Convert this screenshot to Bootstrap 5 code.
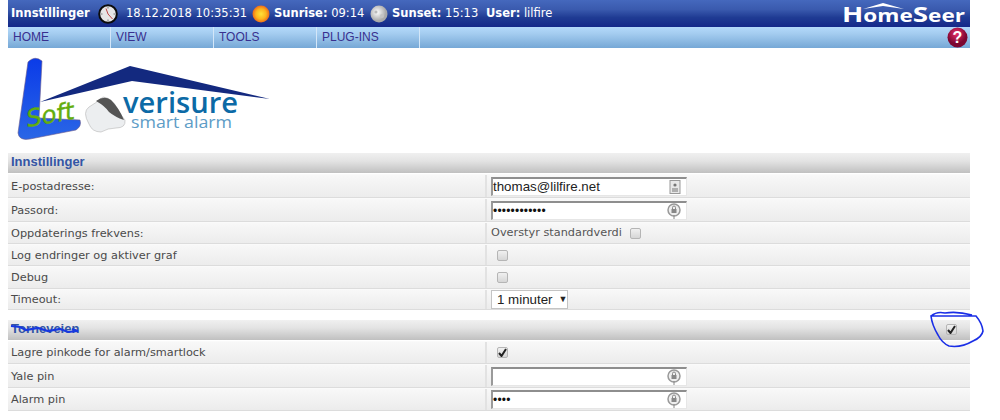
<!DOCTYPE html>
<html lang="no">
<head>
<meta charset="utf-8">
<title>Innstillinger</title>
<link rel="stylesheet" href="https://cdn.jsdelivr.net/npm/bootstrap@5.3.0/dist/css/bootstrap.min.css">
<style>
body{margin:0;background:#fff;font-family:"DejaVu Sans",sans-serif;font-size:11.3px;color:#444;overflow:hidden}
.hs-page{width:962px;margin-left:8px;position:relative;height:420px}
.hs-top{height:27px;background:linear-gradient(#4568bd,#3a5aae 35%,#1f3b93 65%,#14288a);color:#fff;font-size:11.5px;padding-left:3px;white-space:nowrap}
.hs-top b{font-weight:700}
.hs-title{width:87px}
.hs-date{width:122px}
.hs-rise{width:96px}
.hs-set{width:94px}
.hs-ic{flex:none;display:block}
.hs-logo{margin-left:auto;margin-right:3px}
.hs-nav{height:21px;background:linear-gradient(#b3d9fb,#a5cdf0 30%,#76a8d6);position:relative}
.hs-nav a{display:block;width:103px;height:21px;line-height:21px;padding-left:5px;font-family:"Liberation Sans",sans-serif;font-size:12px;color:#38308f;text-decoration:none;border-right:1px solid #d3e6f8}
.hs-help{position:absolute;right:2px;top:0}
.hs-brand{height:105px;display:block}
.hs-sec{margin-bottom:10px}
.hs-head{height:20px;line-height:18px;padding-left:3px;font-family:"Liberation Sans",sans-serif;font-size:13px;font-weight:700;color:#3355a5;background:linear-gradient(#f0f0f0,#e3e3e3 40%,#c0c0c0);margin-bottom:1px;position:relative}
.hs-row{height:22px;display:flex;border-bottom:1px solid #dcdcdc;border-top:1px solid #fafafa;background:linear-gradient(#f8f8f8,#ececec)}
.hs-h21{height:21px}
.hs-h23{height:23px}
.hs-h24{height:24px}
.hs-lab{width:479px;padding-left:3px;padding-top:2px;display:flex;align-items:center;border-right:2px solid #e2e2e2;flex:none;white-space:nowrap;color:#4a4a4a}
.hs-val{padding-left:4px;display:flex;align-items:center;flex:1;color:#555;white-space:nowrap}
.hs-in{width:196px;height:19px;background:#fff;border-top:2px solid #8e8e8e;border-left:2px solid #9a9a9a;border-right:1px solid #e6e6e6;border-bottom:1px solid #e6e6e6;display:flex;align-items:center;font-family:"Liberation Sans",sans-serif;font-size:13.33px;color:#222;justify-content:space-between}
.hs-in svg{margin-right:5px;flex:none}
.hs-dots{font-size:12px;letter-spacing:.2px;color:#111}
.hs-ck{width:11px;height:11px;border:1px solid #b5b5b5;border-radius:2px;background:linear-gradient(#f0f0f0,#d6d6d6);display:inline-flex;align-items:center;justify-content:center;flex:none}
.hs-cki{margin-left:6px}
.hs-sel{width:77px;height:19px;border:1px solid #c4c4c4;background:#fff;font-family:"Liberation Sans",sans-serif;font-size:13.33px;color:#222;padding-left:5px;display:flex;align-items:center;gap:6px}
.hs-sel i{font-style:normal;font-size:9px}
.hs-headck{position:absolute;right:13px;top:4px}
.hs-mark{position:absolute;pointer-events:none}
.hs-m1{left:0;top:0}
.hs-m2{left:921px;top:310px}
</style>
</head>
<body>
<div class="hs-page">
  <div class="hs-top d-flex align-items-center">
    <span class="hs-title fw-bold">Innstillinger</span>
    <svg class="hs-ic" width="20" height="20" viewBox="0 0 20 20"><circle cx="10" cy="10" r="8.8" fill="#e6e6e6" stroke="#0c0c0c" stroke-width="2"/><path d="M10 10 8 4.5M10 10l4.5 5" stroke="#b44" stroke-width="1"/><path d="M10 3v1.5M10 15.5V17M3 10h1.5M15.5 10H17" stroke="#777"/></svg>
    <span class="ms-2 hs-date">18.12.2018 10:35:31</span>
    <svg class="hs-ic ms-1" width="18" height="18" viewBox="0 0 18 18"><defs><radialGradient id="sun"><stop offset="0" stop-color="#ffe23a"/><stop offset=".6" stop-color="#fdb51c"/><stop offset="1" stop-color="#ee6a1a"/></radialGradient></defs><circle cx="9" cy="9" r="8.5" fill="url(#sun)"/></svg>
    <span class="ms-1 hs-rise"><b>Sunrise:</b> 09:14</span>
    <svg class="hs-ic" width="18" height="18" viewBox="0 0 18 18"><defs><radialGradient id="moon" cx=".4" cy=".4"><stop offset="0" stop-color="#fff"/><stop offset="1" stop-color="#aaa"/></radialGradient></defs><circle cx="9" cy="9" r="8.5" fill="url(#moon)"/><circle cx="6" cy="7" r="1.6" fill="#bbb"/><circle cx="12" cy="11" r="2" fill="#c4c4c4"/></svg>
    <span class="ms-1 hs-set"><b>Sunset:</b> 15:13</span>
    <span><b>User:</b> lilfire</span>
    <svg class="hs-logo hs-ic" width="128" height="27" viewBox="0 0 128 27"><path d="M24 9 44 3 65 9 44 6Z" fill="#fff"/><text x="3" y="22" font-family="Open Sans" font-weight="700" font-size="17" fill="#fff" textLength="123" lengthAdjust="spacingAndGlyphs"><tspan font-size="21">H</tspan>ome<tspan font-size="21">S</tspan>eer</text></svg>
  </div>
  <nav class="hs-nav d-flex">
    <a href="#">HOME</a><a href="#">VIEW</a><a href="#">TOOLS</a><a href="#">PLUG-INS</a>
    <svg class="hs-help" width="21" height="21" viewBox="0 0 21 21"><defs><radialGradient id="help" cx=".45" cy=".3"><stop offset="0" stop-color="#e8306a"/><stop offset="1" stop-color="#7c0630"/></radialGradient></defs><circle cx="10.5" cy="10.5" r="10" fill="url(#help)"/><text x="10.5" y="16" text-anchor="middle" font-family="Liberation Sans" font-weight="700" font-size="16" fill="#fff">?</text></svg>
  </nav>
  <svg class="hs-brand" width="280" height="105" viewBox="0 0 280 105">
    <defs><linearGradient id="ell" x1="0" y1="0" x2="0" y2="1"><stop offset="0" stop-color="#0b3be8"/><stop offset="1" stop-color="#2a66e6"/></linearGradient></defs>
    <path d="M20 14Q27 7 34 13L31 70 72 72Q74 78 68 82L22 91Q11 93 10 85Z" fill="url(#ell)" stroke="#6c5a8c" stroke-width=".6"/>
    <path d="M32 54 122 18 262 51 124 33Z" fill="#13297f"/>
    <path d="M95 49Q104 50 109 60 113 68 117 72 118 80 108 80 100 80 93 84 84 84 81 76 74 64 81 59 88 55 95 49Z" fill="#eceef0" stroke="#b5b5b5" stroke-width=".6"/>
    <path d="M88 53Q96 47 103 52 111 60 116 72 107 69 101 64 97 58 88 53Z" fill="#555"/>
    <text x="115" y="65" font-family="Open Sans" font-weight="600" font-size="29" fill="#0c6aa6" textLength="115" lengthAdjust="spacingAndGlyphs">verisure</text>
    <text x="123" y="80" font-family="Open Sans" font-size="17" fill="#5d9cc6" textLength="101" lengthAdjust="spacingAndGlyphs">smart alarm</text>
    <text x="20" y="79" font-family="DejaVu Sans" font-style="italic" font-size="24" fill="#63ad0c" stroke="#63ad0c" stroke-width=".4" textLength="48" lengthAdjust="spacingAndGlyphs" transform="rotate(-10 20 79)">Soft</text>
  </svg>
  <section class="hs-sec">
    <div class="hs-head">Innstillinger</div>
    <div class="hs-row hs-h24"><div class="hs-lab">E-postadresse:</div><div class="hs-val"><div class="hs-in">thomas@lilfire.net<svg width="12" height="14" viewBox="0 0 12 14"><rect x="1" y=".5" width="10" height="13" fill="#e8e8e8" stroke="#999"/><circle cx="6" cy="5" r="1.6" fill="#777"/><path d="M3 9h6M3 11h6" stroke="#777"/></svg></div></div></div>
    <div class="hs-row hs-h24"><div class="hs-lab">Passord:</div><div class="hs-val"><div class="hs-in"><span class="hs-dots">••••••••••••</span><svg width="14" height="16" viewBox="0 0 14 16"><circle cx="7" cy="7" r="6" fill="#eee" stroke="#999" stroke-width="1.5"/><rect x="4.5" y="6" width="5" height="4" fill="#888"/><path d="M5.5 6V4.5a1.5 1.5 0 0 1 3 0V6M7 12v4" fill="none" stroke="#888"/></svg></div></div></div>
    <div class="hs-row"><div class="hs-lab">Oppdaterings frekvens:</div><div class="hs-val">Overstyr standardverdi<span class="hs-ck ms-2"></span></div></div>
    <div class="hs-row"><div class="hs-lab">Log endringer og aktiver graf</div><div class="hs-val"><span class="hs-ck hs-cki"></span></div></div>
    <div class="hs-row hs-h23"><div class="hs-lab">Debug</div><div class="hs-val"><span class="hs-ck hs-cki"></span></div></div>
    <div class="hs-row hs-h21"><div class="hs-lab">Timeout:</div><div class="hs-val"><div class="hs-sel">1 minuter <i>▼</i></div></div></div>
  </section>
  <section class="hs-sec">
    <div class="hs-head">Torneveien
      <svg class="hs-mark hs-m1" width="75" height="20" viewBox="0 0 75 20"><path d="M3 6 12 7 18 10 30 8 40 11 52 9 60 12 70 11 64 9" fill="none" stroke="#1738e0" stroke-width="2.2"/></svg>
      <span class="hs-ck hs-headck"><svg width="9" height="9" viewBox="0 0 9 9"><path d="M1 5 3.5 8 8 1" fill="none" stroke="#222" stroke-width="2"/></svg></span>
    </div>
    <div class="hs-row hs-h23"><div class="hs-lab">Lagre pinkode for alarm/smartlock</div><div class="hs-val"><span class="hs-ck hs-cki"><svg width="9" height="9" viewBox="0 0 9 9"><path d="M1 5 3.5 8 8 1" fill="none" stroke="#222" stroke-width="2"/></svg></span></div></div>
    <div class="hs-row hs-h24"><div class="hs-lab">Yale pin</div><div class="hs-val"><div class="hs-in"><span></span><svg width="14" height="16" viewBox="0 0 14 16"><circle cx="7" cy="7" r="6" fill="#eee" stroke="#999" stroke-width="1.5"/><rect x="4.5" y="6" width="5" height="4" fill="#888"/><path d="M5.5 6V4.5a1.5 1.5 0 0 1 3 0V6M7 12v4" fill="none" stroke="#888"/></svg></div></div></div>
    <div class="hs-row hs-h23"><div class="hs-lab">Alarm pin</div><div class="hs-val"><div class="hs-in"><span class="hs-dots">••••</span><svg width="14" height="16" viewBox="0 0 14 16"><circle cx="7" cy="7" r="6" fill="#eee" stroke="#999" stroke-width="1.5"/><rect x="4.5" y="6" width="5" height="4" fill="#888"/><path d="M5.5 6V4.5a1.5 1.5 0 0 1 3 0V6M7 12v4" fill="none" stroke="#888"/></svg></div></div></div>
  </section>
  <svg class="hs-mark hs-m2" width="60" height="44" viewBox="0 0 60 44"><path d="M2 6Q8 1 16 3 28 1 43 5M47 6Q53 13 54 21 53 27 44 31 32 38 20 36 13 33 9 25 3 15 2 6Z" fill="none" stroke="#1a2ee6" stroke-width="1.6"/></svg>
</div>
<script src="https://cdn.jsdelivr.net/npm/bootstrap@5.3.0/dist/js/bootstrap.bundle.min.js"></script>
</body>
</html>
